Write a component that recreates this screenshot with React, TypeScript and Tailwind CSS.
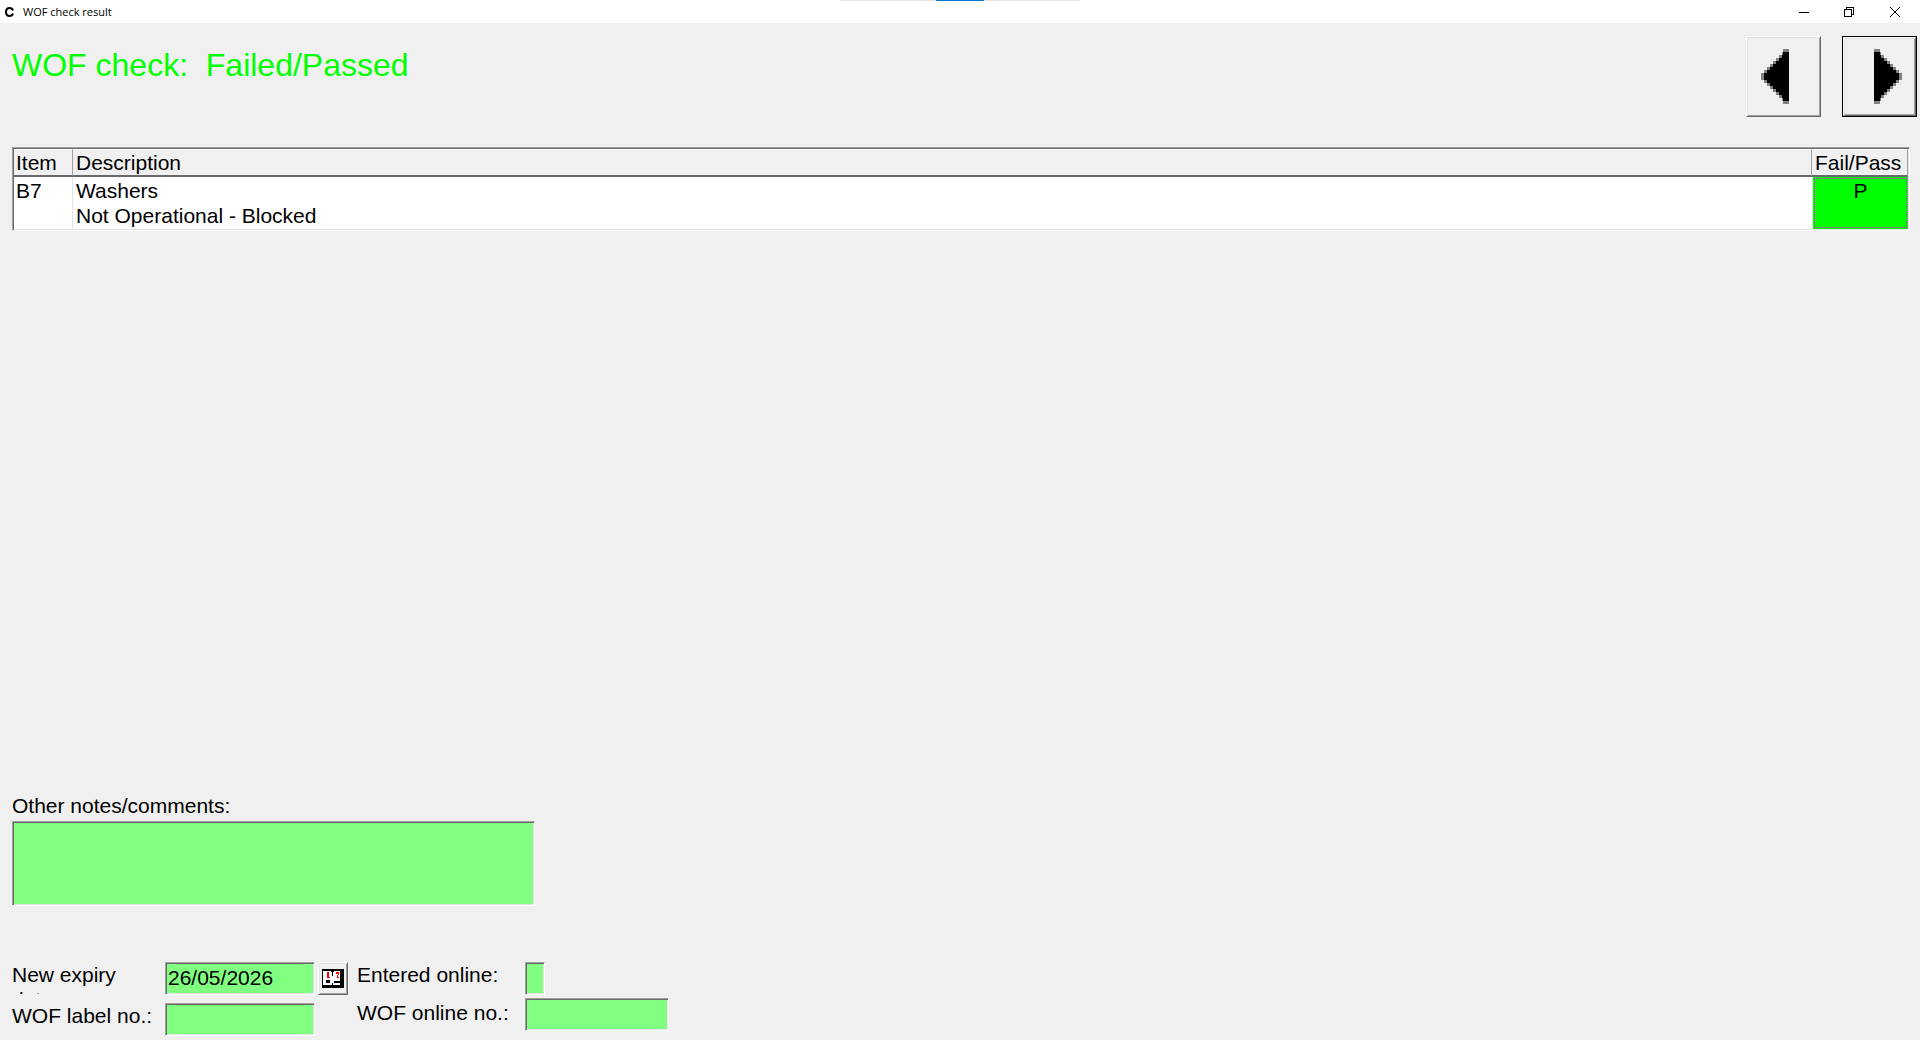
import { useState } from "react"

const raised =
  "border border-t-white border-l-white border-r-[#696969] border-b-[#696969] shadow-[inset_1px_1px_0_#e3e3e3,inset_-1px_-1px_0_#a0a0a0]"
const sunken =
  "border border-t-[#a0a0a0] border-l-[#a0a0a0] border-r-white border-b-white shadow-[inset_1px_1px_0_#696969,inset_-1px_-1px_0_#e3e3e3]"
const field = `${sunken} h-[33px] bg-[#80ff80] px-[2px] pb-[2px] outline-none`
const headCell =
  "border-t border-r border-b-2 border-t-white border-r-[#a0a0a0] border-b-[#696969] font-normal"

const steps = [1, 2, 3, 4, 5, 6, 7]

const items = [
  { code: "B7", lines: ["Washers", "Not Operational - Blocked"], result: "P" },
]

function Arrow({ flip = false }: { flip?: boolean }) {
  return (
    <svg width="28" height="55" viewBox="0 0 28 55" shapeRendering="crispEdges" aria-hidden="true">
      <g transform={flip ? "translate(28 0) scale(-1 1)" : undefined}>
        <rect x="0" y="24" width="3" height="7" fill="#808080" />
        {steps.map((k) => (
          <g key={k}>
            <rect x={k * 3} y={24 - k * 3} width="3" height={7 + k * 6} fill="#808080" />
            <rect x={k * 3} y={27 - k * 3} width="3" height={1 + k * 6} fill="#000" />
          </g>
        ))}
        <rect x="22" y="0" width="6" height="55" fill="#808080" />
        <rect x="24" y="3" width="4" height="49" fill="#000" />
        <rect x="22" y="3" width="2" height="49" fill="#000" />
      </g>
    </svg>
  )
}

function CalendarIcon() {
  return (
    <svg width="22" height="19" viewBox="0 0 22 19" shapeRendering="crispEdges" aria-hidden="true">
      <path fill="#000" d="M0 0h22v19H0z" />
      <path fill="#fff" d="M1 2h8v1h1v13H1zM11 3h1V2h6v14h-7zM10 7h1v7h-1z" />
      <path fill="#000" d="M4 11h4v3H4zM12 12h6v2h-6z" />
      <path fill="#f00" d="M5 3h2v5h1v1H5zM14 3h3v3h-1v2h1v1h-2V6h1V5h-2z" />
    </svg>
  )
}

function TitleBar() {
  return (
    <header className="relative flex h-[23px] items-center bg-white pl-[5px]">
      <div className="absolute inset-x-0 top-0 mx-auto flex h-px w-60 justify-center bg-[#e5e5e5]">
        <div className="h-px w-12 bg-[#0078d7]" />
      </div>
      <svg width="9" height="10" viewBox="0 0 9 10" fill="none" stroke="#000" strokeWidth="2" aria-hidden="true">
        <path d="M8 3.500C7.500 2 6.300 1 4.700 1 2.500 1 1 2.700 1 5s1.500 4 3.700 4C6.300 9 7.500 8 8 6.500" />
      </svg>
      <span className="ml-[9px] flex-1 font-['Open_Sans',sans-serif] text-[11px] leading-4">WOF check result</span>
      <div className="flex pr-[2px]">
        <button aria-label="Minimize" className="flex h-5 w-[45px] items-center justify-center">
          <svg width="10" height="10" viewBox="0 0 10 10" shapeRendering="crispEdges">
            <path d="M0 5h10v1H0z" />
          </svg>
        </button>
        <button aria-label="Restore" className="flex h-5 w-[46px] items-center justify-center">
          <svg width="10" height="10" viewBox="0 0 10 10" fill="none" stroke="#000" shapeRendering="crispEdges">
            <path d="M.5 2.500h7v7h-7zM2.500 2.500v-2h7v7h-2" />
          </svg>
        </button>
        <button aria-label="Close" className="flex h-5 w-[46px] items-center justify-center">
          <svg width="10" height="10" viewBox="0 0 10 10" fill="none" stroke="#000">
            <path d="M0 0l10 10M10 0L0 10" />
          </svg>
        </button>
      </div>
    </header>
  )
}

export default function App() {
  const [notes, setNotes] = useState("")
  const [expiry, setExpiry] = useState("26/05/2026")

  return (
    <div className="flex min-h-screen flex-col bg-[#f0f0f0] font-['Liberation_Sans',Arial,sans-serif] text-[21px] leading-[25px] text-black">
      <TitleBar />

      <div className="flex items-start justify-between pt-[13px] pr-[3px] pl-3">
        <h1 className="mt-[11px] text-[32px] leading-[36px] whitespace-pre text-[#00ff00]">WOF check:  Failed/Passed</h1>
        <div className="flex gap-[21px]">
          <button aria-label="Previous" className={`${raised} flex h-[81px] w-[75px] items-center pl-[14px]`}>
            <Arrow />
          </button>
          <button aria-label="Next" className="h-[81px] w-[75px] border border-black">
            <span className={`${raised} flex h-full w-full items-center justify-end pr-[13px]`}>
              <Arrow flip />
            </span>
          </button>
        </div>
      </div>

      <div className={`${sunken} mt-[30px] mr-[10px] ml-3 p-px`}>
        <table className="w-full table-fixed border-separate border-spacing-0 text-left">
          <thead>
            <tr className="h-7 align-top">
              <th className={`${headCell} w-[59px] pl-[2px]`}>Item</th>
              <th className={`${headCell} pl-[3px]`}>Description</th>
              <th className={`${headCell} w-24 pl-[3px]`}>Fail/Pass</th>
            </tr>
          </thead>
          <tbody>
            {items.map((item) => (
              <tr key={item.code} className="h-[52px] bg-white align-top">
                <td className="border-r border-[#e3e3e3] pt-px pl-[2px]">{item.code}</td>
                <td className="pt-px pl-[3px]">
                  {item.lines.map((line) => (
                    <div key={line}>{line}</div>
                  ))}
                </td>
                <td className="border-l border-[#e3e3e3] bg-[#00ff00] p-px text-center">
                  <div className="h-[50px] outline-1 -outline-offset-1 outline-[#ff00ff] outline-dotted">
                    {item.result}
                  </div>
                </td>
              </tr>
            ))}
          </tbody>
        </table>
      </div>

      <div className="mt-auto pt-12 pl-3">
        <label htmlFor="notes" className="mb-[3px] block">Other notes/comments:</label>
        <textarea
          id="notes"
          value={notes}
          onChange={(e) => setNotes(e.target.value)}
          className={`${sunken} block h-[85px] w-[523px] resize-none bg-[#80ff80] px-[2px] outline-none`}
        />
      </div>

      <div className="flex items-start pt-14 pb-1 pl-3">
        <div className="grid grid-cols-[153px_150px] gap-y-2">
          <label htmlFor="expiry" className="h-8 w-[148px] overflow-hidden">New expiry date:</label>
          <input id="expiry" value={expiry} onChange={(e) => setExpiry(e.target.value)} className={field} />
          <label htmlFor="label-no" className="whitespace-nowrap">WOF label no.:</label>
          <input id="label-no" className={field} />
        </div>
        <button aria-label="Pick date" className={`${raised} ml-[3px] flex h-[33px] w-[30px] items-center justify-center`}>
          <CalendarIcon />
        </button>
        <div className="ml-[9px] grid grid-cols-[168px_144px] gap-y-[3px]">
          <label htmlFor="online">Entered online:</label>
          <input id="online" className={`${field} w-5`} />
          <label htmlFor="online-no" className="pt-[2px]">WOF online no.:</label>
          <input id="online-no" className={field} />
        </div>
      </div>
    </div>
  )
}
